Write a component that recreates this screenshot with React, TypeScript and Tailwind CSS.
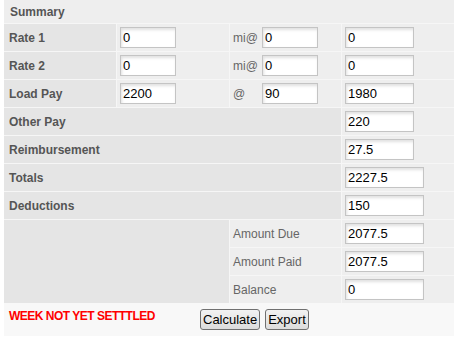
import React from "react";

const font = { fontFamily: '"Liberation Sans", Arial, sans-serif' };

function Inp({ v, w = "w-[56px]" }: { v: string; w?: string }) {
  return (
    <input
      readOnly
      value={v}
      className={`${w} h-[21px] border border-[#c4c4c4] bg-white px-[2px] text-[13px] text-black outline-none shadow-[inset_1px_2px_3px_rgba(0,0,0,0.12)]`}
      style={font}
    />
  );
}

const lab = "bg-[#e5e5e5] flex items-center pl-[5px] text-[12px] font-bold text-[#555]";
const val = "bg-[#eeeeee] flex items-center pl-[3px]";

export default function App() {
  return (
    <div className="bg-white w-[455px] h-[347px] pl-[4px]" style={font}>
      <div className="w-[450px] grid grid-cols-[112px_112px_111px_112px] auto-rows-[27px] grid-rows-[23px] gap-px bg-[#f6f6f6]">
        <div className="col-span-4 bg-[#eeeeee] flex items-center pl-[6px] text-[12px] font-bold text-[#555]">
          Summary
        </div>

        <div className={lab}>Rate 1</div>
        <div className={val}><Inp v="0" /></div>
        <div className={`${val} text-[12px] text-[#666]`}>
          <span className="w-[29px]">mi@</span>
          <Inp v="0" />
        </div>
        <div className={val}><Inp v="0" w="w-[69px]" /></div>

        <div className={lab}>Rate 2</div>
        <div className={val}><Inp v="0" /></div>
        <div className={`${val} text-[12px] text-[#666]`}>
          <span className="w-[29px]">mi@</span>
          <Inp v="0" />
        </div>
        <div className={val}><Inp v="0" w="w-[69px]" /></div>

        <div className={lab}>Load Pay</div>
        <div className={val}><Inp v="2200" /></div>
        <div className={`${val} text-[12px] text-[#666]`}>
          <span className="w-[29px]">@</span>
          <Inp v="90" />
        </div>
        <div className={val}><Inp v="1980" w="w-[69px]" /></div>

        <div className={`${lab} col-span-3`}>Other Pay</div>
        <div className={val}><Inp v="220" w="w-[69px]" /></div>

        <div className={`${lab} col-span-3`}>Reimbursement</div>
        <div className={val}><Inp v="27.5" w="w-[69px]" /></div>

        <div className={`${lab} col-span-3`}>Totals</div>
        <div className={val}><Inp v="2227.5" w="w-[79px]" /></div>

        <div className={`${lab} col-span-3`}>Deductions</div>
        <div className={val}><Inp v="150" w="w-[79px]" /></div>

        <div className="bg-[#e5e5e5] col-span-2 row-span-3" />
        <div className={`${val} text-[12px] text-[#666]`}>Amount Due</div>
        <div className={val}><Inp v="2077.5" w="w-[79px]" /></div>
        <div className={`${val} text-[12px] text-[#666]`}>Amount Paid</div>
        <div className={val}><Inp v="2077.5" w="w-[79px]" /></div>
        <div className={`${val} text-[12px] text-[#666]`}>Balance</div>
        <div className={val}><Inp v="0" w="w-[79px]" /></div>
      </div>
      <div className="w-[450px] h-[33px] bg-[#f8f8f8] flex items-start">
        <div className="w-[196px] pl-[5px] pt-[6px] text-[12px] leading-[14px] font-bold text-[#ff0000] tracking-[-0.5px]">
          WEEK NOT YET SETTTLED
        </div>
        <div className="flex gap-[5px] pt-[6px]">
          <button className="h-[21px] px-[2px] border border-[#707070] rounded-[3px] bg-gradient-to-b from-[#f2f2f2] to-[#dcdcdc] text-[13px] text-black leading-none" style={font}>
            Calculate
          </button>
          <button className="h-[21px] px-[2px] border border-[#707070] rounded-[3px] bg-gradient-to-b from-[#f2f2f2] to-[#dcdcdc] text-[13px] text-black leading-none" style={font}>
            Export
          </button>
        </div>
      </div>
    </div>
  );
}
